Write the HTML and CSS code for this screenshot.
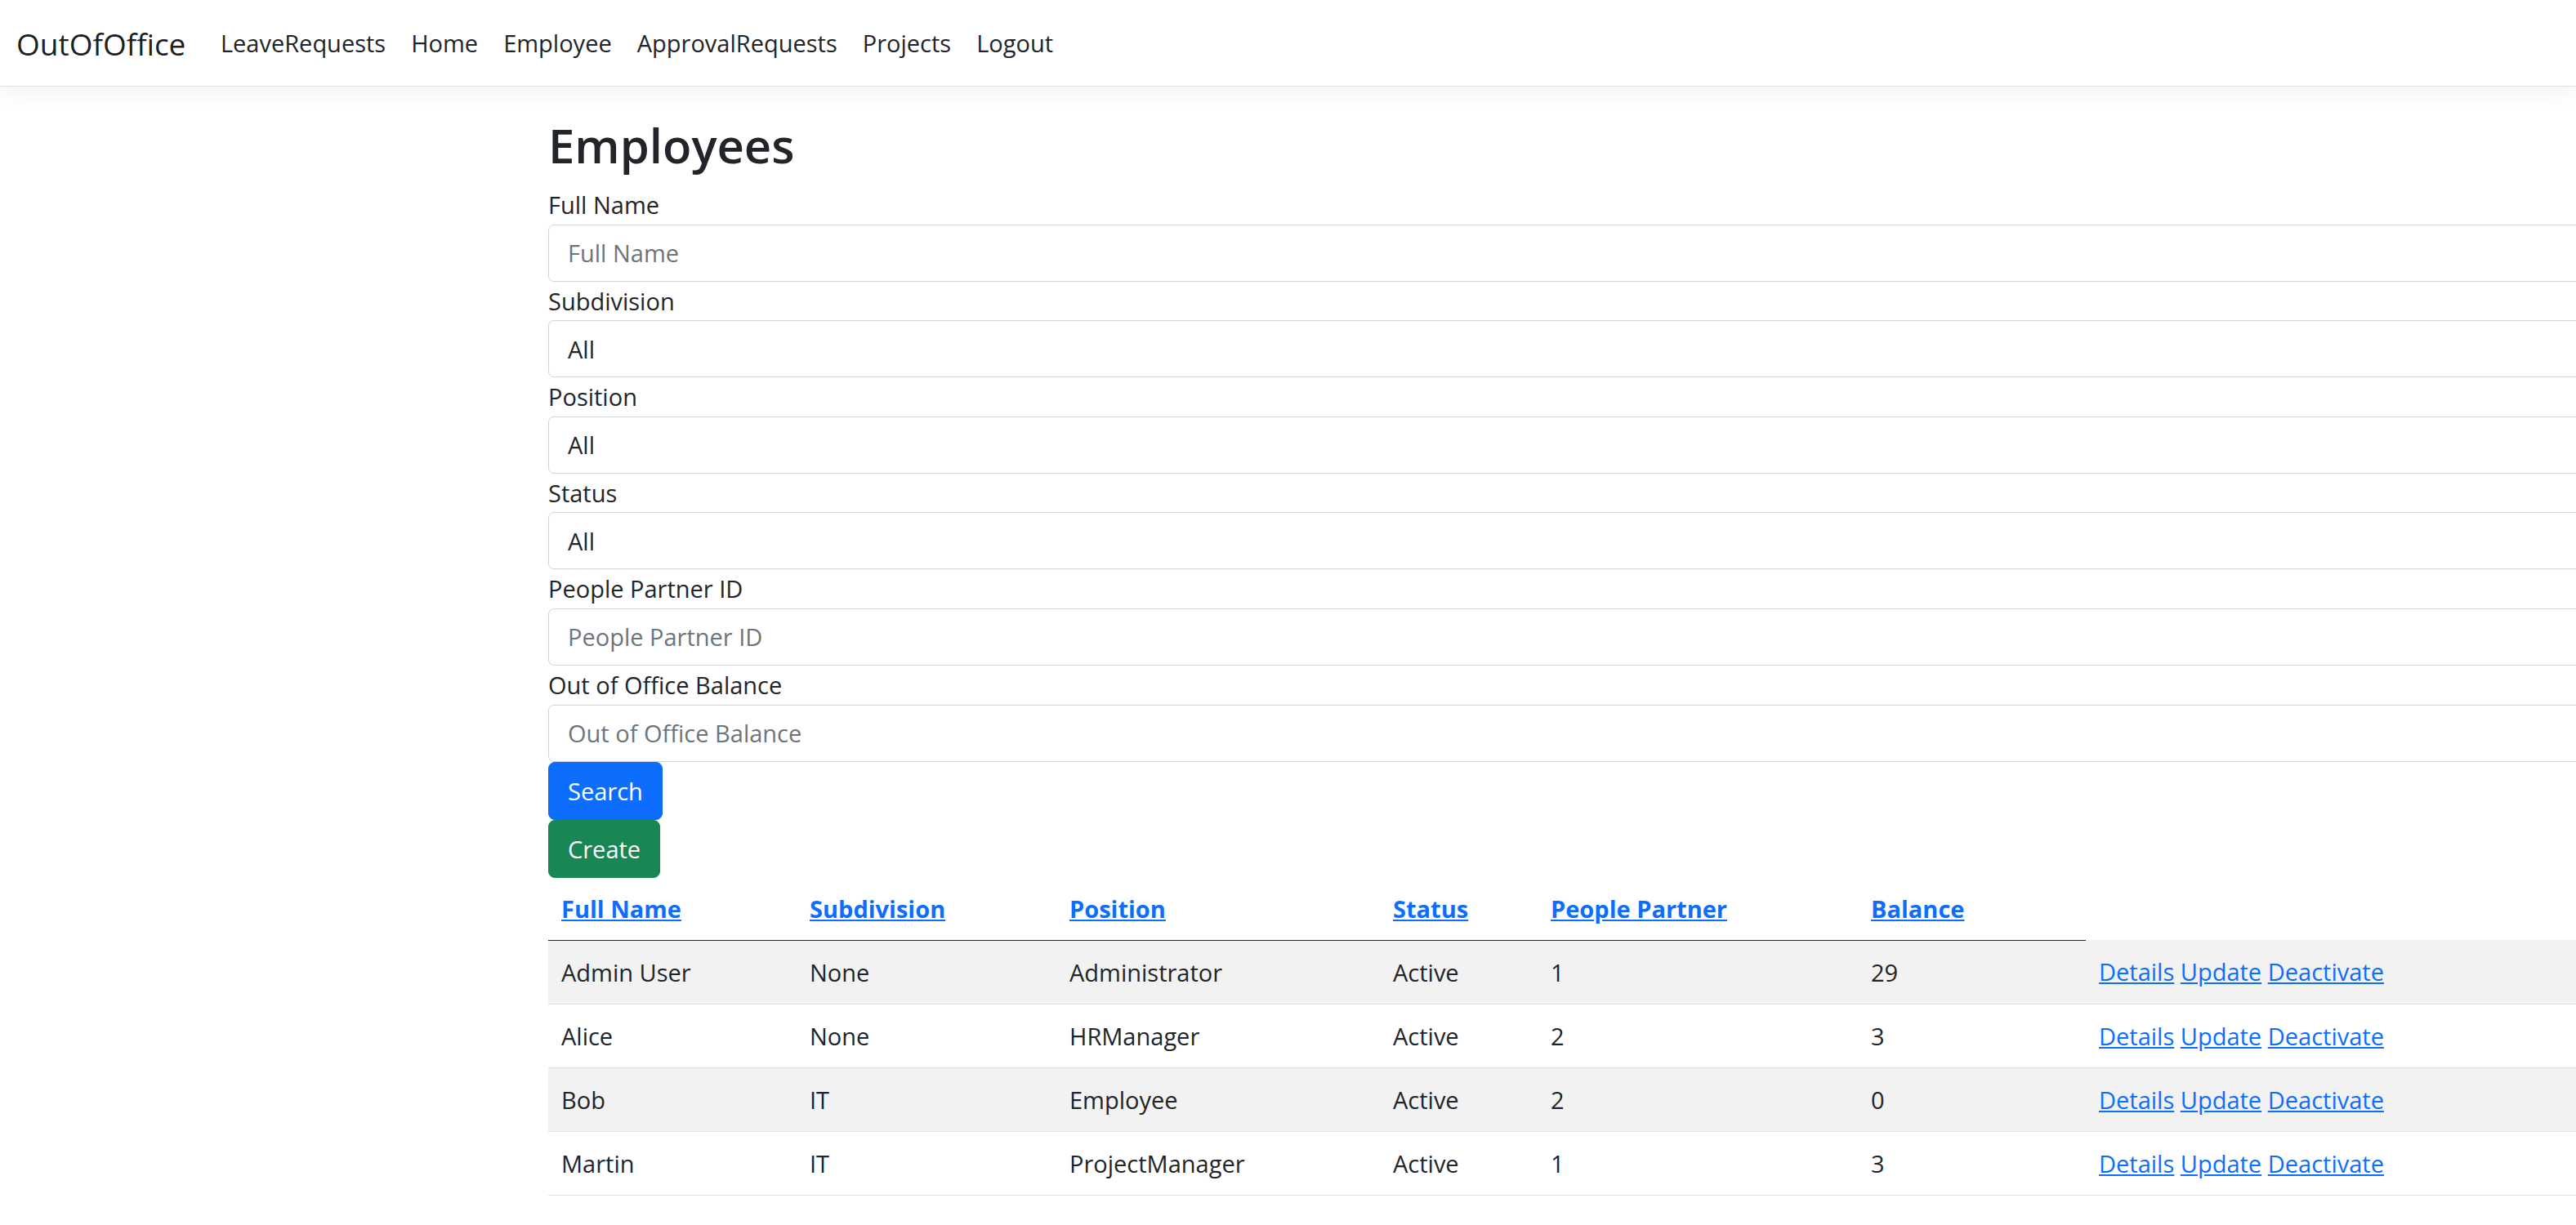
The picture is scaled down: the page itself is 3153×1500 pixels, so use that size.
FILE: index.html
```html
<!DOCTYPE html>
<html lang="en">
<head>
<meta charset="utf-8">
<title>Employees - OutOfOffice</title>
<link rel="stylesheet" href="styles.css">
</head>
<body>
<header class="navbar">
  <a class="brand" href="#">OutOfOffice</a>
  <nav class="nav">
    <a class="nav-link" href="#">LeaveRequests</a>
    <a class="nav-link" href="#">Home</a>
    <a class="nav-link" href="#">Employee</a>
    <a class="nav-link" href="#">ApprovalRequests</a>
    <a class="nav-link" href="#">Projects</a>
    <a class="nav-link" href="#">Logout</a>
  </nav>
</header>
<main class="container">
  <h1 class="title">Employees</h1>
  <form class="filters">
    <label class="form-label" for="fullName">Full Name</label>
    <input class="form-control" id="fullName" type="text" placeholder="Full Name">
    <label class="form-label" for="subdivision">Subdivision</label>
    <select class="form-control form-select" id="subdivision"><option>All</option></select>
    <label class="form-label" for="position">Position</label>
    <select class="form-control form-select" id="position"><option>All</option></select>
    <label class="form-label" for="status">Status</label>
    <select class="form-control form-select" id="status"><option>All</option></select>
    <label class="form-label" for="partner">People Partner ID</label>
    <input class="form-control" id="partner" type="text" placeholder="People Partner ID">
    <label class="form-label" for="balance">Out of Office Balance</label>
    <input class="form-control" id="balance" type="text" placeholder="Out of Office Balance">
  </form>
  <div class="actions">
    <button class="btn btn-primary" type="button">Search</button>
    <button class="btn btn-success" type="button">Create</button>
  </div>
  <table class="table">
    <colgroup>
      <col class="w-name"><col class="w-sub"><col class="w-pos"><col class="w-status"><col class="w-partner"><col class="w-bal"><col class="w-act">
    </colgroup>
    <thead>
      <tr>
        <th><a href="#">Full Name</a></th>
        <th><a href="#">Subdivision</a></th>
        <th><a href="#">Position</a></th>
        <th><a href="#">Status</a></th>
        <th><a href="#">People Partner</a></th>
        <th><a href="#">Balance</a></th>
      </tr>
    </thead>
    <tbody>
      <tr>
        <td>Admin User</td><td>None</td><td>Administrator</td><td>Active</td><td>1</td><td>29</td>
        <td><a href="#">Details</a> <a href="#">Update</a> <a href="#">Deactivate</a></td>
      </tr>
      <tr>
        <td>Alice</td><td>None</td><td>HRManager</td><td>Active</td><td>2</td><td>3</td>
        <td><a href="#">Details</a> <a href="#">Update</a> <a href="#">Deactivate</a></td>
      </tr>
      <tr>
        <td>Bob</td><td>IT</td><td>Employee</td><td>Active</td><td>2</td><td>0</td>
        <td><a href="#">Details</a> <a href="#">Update</a> <a href="#">Deactivate</a></td>
      </tr>
      <tr>
        <td>Martin</td><td>IT</td><td>ProjectManager</td><td>Active</td><td>1</td><td>3</td>
        <td><a href="#">Details</a> <a href="#">Update</a> <a href="#">Deactivate</a></td>
      </tr>
    </tbody>
  </table>
</main>
</body>
</html>
```
FILE: styles.css
```css
html, body {
  margin: 0;
  padding: 0;
  overflow: hidden;
  background: #ffffff;
}

body {
  font-family: "Open Sans", "Noto Sans", sans-serif;
  font-size: 29px;
  color: #212529;
}

.navbar {
  display: flex;
  align-items: center;
  height: 105px;
  padding: 0 20px;
  background: #ffffff;
  border-bottom: 1px solid #e3e3e3;
  box-shadow: 0 8px 24px rgba(0, 0, 0, 0.05);
}

.brand {
  font-size: 37px;
  color: rgba(0, 0, 0, 0.9);
  text-decoration: none;
  margin-right: 27px;
  margin-top: 2px;
}

.nav {
  display: flex;
}

.nav-link {
  padding: 0 15.5px;
  color: #212529;
  text-decoration: none;
  font-size: 29px;
}

.container {
  width: 2592px;
  margin-left: 671px;
}

.title {
  font-size: 58px;
  font-weight: 600;
  line-height: 72px;
  margin: 36px 0 13px;
}

.filters {
  display: flex;
  flex-direction: column;
}

.form-label {
  display: block;
  line-height: 47.6px;
}

.form-control {
  box-sizing: border-box;
  display: block;
  width: 100%;
  height: 70px;
  padding: 0 23px;
  font-family: inherit;
  font-size: 29px;
  color: #212529;
  background: #ffffff;
  border: 1px solid #ced4da;
  border-radius: 7px;
  outline: none;
}

.form-control::placeholder {
  color: #6c757d;
}

.form-select {
  appearance: none;
  -webkit-appearance: none;
}

.actions {
  display: flex;
  flex-direction: column;
  align-items: flex-start;
}

.btn {
  height: 71px;
  padding: 0 23px;
  font-family: inherit;
  font-size: 29px;
  color: #ffffff;
  border: 1px solid transparent;
  border-radius: 8px;
}

.btn-primary {
  background: #0d6efd;
  border-color: #0d6efd;
}

.btn-success {
  background: #198754;
  border-color: #198754;
}

.table {
  width: 2592px;
  table-layout: fixed;
  border-collapse: collapse;
}

.w-name { width: 304px; }
.w-sub { width: 318px; }
.w-pos { width: 396px; }
.w-status { width: 193px; }
.w-partner { width: 392px; }
.w-bal { width: 279px; }
.w-act { width: 710px; }

.table th,
.table td {
  text-align: left;
  white-space: nowrap;
  padding: 15px 16px;
}

.table th {
  line-height: 46px;
  font-weight: 700;
  border-bottom: 1px solid #212529;
}

.table td {
  line-height: 47px;
  border-bottom: 1px solid #dee2e6;
}

.table tbody tr:nth-child(odd) td {
  background: #f2f2f2;
}

.table a {
  color: #0d6efd;
  text-decoration: underline;
}
```
